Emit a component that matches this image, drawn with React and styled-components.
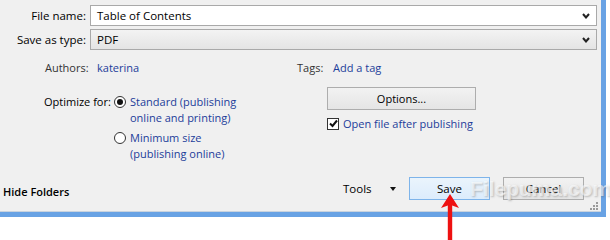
import React from 'react';
import styled, { createGlobalStyle } from 'styled-components';

const GlobalStyle = createGlobalStyle`
  html, body {
    margin: 0;
    padding: 0;
    background: #ffffff;
  }
  body {
    font-family: "Open Sans", "Noto Sans", sans-serif;
    font-size: 11px;
    color: #000;
  }
`;

const Page = styled.div`
  position: relative;
  width: 610px;
  height: 240px;
  overflow: hidden;
  background: #ffffff;
`;

const Window = styled.div`
  width: 601px;
  height: 212px;
  background: #f0f0f0;
  border-right: 5px solid #68a2e4;
  border-bottom: 5px solid #68a2e4;
  box-shadow: inset 0 -1px 0 #c9d3de;
  display: flex;
  flex-direction: column;
`;

const Fields = styled.div`
  display: grid;
  grid-template-columns: 86px 507px;
  column-gap: 4px;
  row-gap: 3px;
  padding-top: 5px;
  align-items: center;
`;

const FieldLabel = styled.div`
  text-align: right;
  font-size: 11.5px;
`;

const Box = styled.div`
  height: 21px;
  box-sizing: border-box;
  border: 1px solid #a9a9a9;
  background: ${p => (p.$select ? 'linear-gradient(#f3f3f3, #e4e4e4)' : '#ffffff')};
  display: flex;
  align-items: center;
  padding: 0 6px 0 6px;
  justify-content: space-between;
  font-size: 11.5px;
`;

const Chevron = () => (
  <svg width="8" height="6" viewBox="0 0 8 6">
    <path d="M1 1 L4 4.5 L7 1" fill="none" stroke="#222" strokeWidth="2" />
  </svg>
);

const MetaRow = styled.div`
  display: flex;
  align-items: center;
  margin-top: 9px;
  padding-left: 45px;
  height: 16px;
`;

const MetaCell = styled.div`
  display: flex;
  width: ${p => p.$w}px;
`;

const MetaLabel = styled.span`
  display: inline-block;
  width: ${p => p.$w}px;
  color: #333;
`;

const LinkText = styled.span`
  color: #1c3d9a;
`;

const OptionsArea = styled.div`
  display: flex;
  margin-top: 19px;
  padding-left: 44px;
`;

const OptimizeCol = styled.div`
  display: flex;
  width: 283px;
`;

const OptimizeLabel = styled.div`
  width: 70px;
  line-height: 16px;
`;

const RadioGroup = styled.div`
  display: flex;
  flex-direction: column;
  gap: 4px;
`;

const RadioRow = styled.div`
  display: flex;
  align-items: flex-start;
  gap: 4px;
  line-height: 16px;
`;

const RadioCircle = styled.span`
  width: 12px;
  height: 12px;
  margin-top: 2px;
  box-sizing: border-box;
  border-radius: 50%;
  border: 1px solid #333;
  background: #fff;
  display: flex;
  align-items: center;
  justify-content: center;
  flex-shrink: 0;
  &::after {
    content: '';
    width: 6px;
    height: 6px;
    border-radius: 50%;
    background: ${p => (p.$on ? '#111' : 'transparent')};
  }
`;

const RightCol = styled.div`
  display: flex;
  flex-direction: column;
  gap: 6px;
  margin-top: -7px;
`;

const Button = styled.div`
  width: ${p => p.$w}px;
  height: 23px;
  box-sizing: border-box;
  border: 1px solid ${p => (p.$primary ? '#7eb4ea' : '#adadad')};
  background: ${p => (p.$primary ? 'linear-gradient(#eaf4fc, #dcecfc)' : 'linear-gradient(#f2f2f2, #e5e5e5)')};
  display: flex;
  align-items: center;
  justify-content: center;
`;

const CheckRow = styled.div`
  display: flex;
  align-items: center;
  gap: 4px;
`;

const CheckBox = styled.span`
  width: 12px;
  height: 12px;
  box-sizing: border-box;
  border: 1px solid #333;
  background: #fff;
  display: flex;
  align-items: center;
  justify-content: center;
`;

const Footer = styled.div`
  margin-top: auto;
  display: flex;
  align-items: center;
  padding: 0 0 12px 3px;
`;

const HideFolders = styled.div`
  width: 340px;
  font-weight: 600;
  padding-top: 5px;
`;

const Tools = styled.div`
  display: flex;
  align-items: center;
  width: 66px;
  gap: 18px;
  font-size: 11.5px;
`;

const Caret = styled.span`
  width: 0;
  height: 0;
  border-left: 3px solid transparent;
  border-right: 3px solid transparent;
  border-top: 4px solid #111;
`;

const Buttons = styled.div`
  display: flex;
  gap: 13px;
  font-size: 11.5px;
`;

const Grip = styled.svg`
  position: absolute;
  left: 590px;
  top: 202px;
`;

const Watermark = styled.div`
  position: absolute;
  left: 470px;
  top: 177px;
  white-space: nowrap;
  font-family: "Liberation Sans", Arial, sans-serif;
  font-weight: bold;
  font-size: 21px;
  color: rgba(255, 255, 255, 0.6);
  text-shadow: 1px 1px 2px rgba(90, 90, 90, 0.35);
  pointer-events: none;
`;

const Arrow = styled.svg`
  position: absolute;
  left: 439px;
  top: 193px;
`;

export default function App() {
  return (
    <Page>
      <GlobalStyle />
      <Window>
        <Fields>
          <FieldLabel>File name:</FieldLabel>
          <Box>
            <span>Table of Contents</span>
            <Chevron />
          </Box>
          <FieldLabel>Save as type:</FieldLabel>
          <Box $select>
            <span>PDF</span>
            <Chevron />
          </Box>
        </Fields>

        <MetaRow>
          <MetaCell $w={252}>
            <MetaLabel $w={52}>Authors:</MetaLabel>
            <LinkText>katerina</LinkText>
          </MetaCell>
          <MetaCell $w={150}>
            <MetaLabel $w={36}>Tags:</MetaLabel>
            <LinkText>Add a tag</LinkText>
          </MetaCell>
        </MetaRow>

        <OptionsArea>
          <OptimizeCol>
            <OptimizeLabel>Optimize for:</OptimizeLabel>
            <RadioGroup>
              <RadioRow>
                <RadioCircle $on />
                <LinkText>Standard (publishing<br />online and printing)</LinkText>
              </RadioRow>
              <RadioRow>
                <RadioCircle />
                <LinkText>Minimum size<br />(publishing online)</LinkText>
              </RadioRow>
            </RadioGroup>
          </OptimizeCol>
          <RightCol>
            <Button $w={149}>Options...</Button>
            <CheckRow>
              <CheckBox>
                <svg width="9" height="9" viewBox="0 0 9 9">
                  <path d="M1 4.5 L3.5 7 L8 1.5" fill="none" stroke="#111" strokeWidth="2" />
                </svg>
              </CheckBox>
              <LinkText>Open file after publishing</LinkText>
            </CheckRow>
          </RightCol>
        </OptionsArea>

        <Footer>
          <HideFolders>Hide Folders</HideFolders>
          <Tools>
            <span>Tools</span>
            <Caret />
          </Tools>
          <Buttons>
            <Button $w={81} $primary>Save</Button>
            <Button $w={81}>Cancel</Button>
          </Buttons>
        </Footer>
      </Window>

      <Grip width="8" height="8" viewBox="0 0 8 8">
        {[[6, 0], [6, 3], [3, 3], [6, 6], [3, 6], [0, 6]].map(([x, y]) => (
          <rect key={`${x}-${y}`} x={x} y={y} width="2" height="2" fill="#9a9a9a" />
        ))}
      </Grip>

      <Watermark>Filepuma.com</Watermark>

      <Arrow width="22" height="47" viewBox="0 0 22 47">
        <path d="M11 1 L20 15 L13.2 12.5 L13.2 47 L8.8 47 L8.8 12.5 L2 15 Z" fill="#ee1111" />
      </Arrow>
    </Page>
  );
}
